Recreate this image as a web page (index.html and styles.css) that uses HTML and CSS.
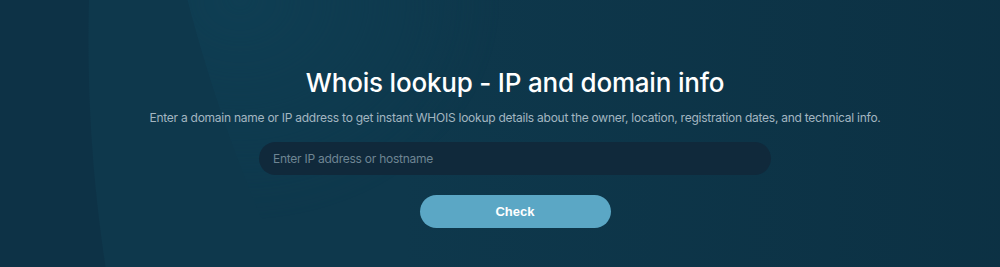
FILE: index.html
```html
<!DOCTYPE html>
<html lang="en">
<head>
<meta charset="UTF-8">
<title>Whois lookup</title>
<link rel="stylesheet" href="styles.css">
</head>
<body>

<section class="hero">
    <div class="hero-content">
        <h1 class="hero-title">Whois lookup - IP and domain info</h1>
        <p class="hero-text">Enter a domain name or IP address to get instant WHOIS lookup details about the owner, location, registration dates, and technical info.</p>
        <form class="lookup-form" onsubmit="return false">
            <input type="text" class="lookup-input" placeholder="Enter IP address or hostname">
            <button type="submit" class="lookup-button">Check</button>
        </form>
    </div>
</section>

</body>
</html>
```

FILE: styles.css
```css
html, body {
    margin: 0;
    padding: 0;
}

body {
    font-family: Inter, "Noto Sans", sans-serif;
    background-color: #0d3246;
    color: #fff;
}

.hero {
    position: relative;
    height: 267px;
    overflow: hidden;
    background:
        linear-gradient(to right, rgba(11, 44, 62, 0) 40%, rgba(11, 46, 64, 0.7) 100%),
        radial-gradient(circle 1515px at 1603px 40px, #0e384c 0, #0e384c 1514px, rgba(14, 56, 76, 0) 1515px),
        #0d3246;
}

/* soft lighter band near the top left */
.hero::before {
    content: "";
    position: absolute;
    inset: 0;
    background: radial-gradient(circle 1593px at 1729px -400px, #0f3e53 0, #0f3e53 1592px, rgba(15, 62, 83, 0) 1593px);
    -webkit-mask-image: radial-gradient(ellipse 260px 220px at 240px 0, #000 0, rgba(0, 0, 0, 0.5) 50%, transparent 100%);
    mask-image: radial-gradient(ellipse 260px 220px at 240px 0, #000 0, rgba(0, 0, 0, 0.5) 50%, transparent 100%);
}

.hero-content {
    position: relative;
    display: flex;
    flex-direction: column;
    align-items: center;
    padding: 67px 0 0 30px;
}

.hero-title {
    margin: 0;
    font-size: 26px;
    line-height: 32px;
    font-weight: 500;
    letter-spacing: -0.2px;
}

.hero-text {
    margin: 10px 0 0;
    font-size: 12px;
    line-height: 18px;
    letter-spacing: -0.25px;
    color: #a3b6c1;
}

.lookup-form {
    display: flex;
    flex-direction: column;
    align-items: center;
    gap: 20px;
    margin-top: 15px;
}

.lookup-input {
    width: 512px;
    height: 33px;
    box-sizing: border-box;
    padding: 0 14px;
    border: none;
    border-radius: 17px;
    background: #10293b;
    color: #fff;
    font-family: Inter, "Noto Sans", sans-serif;
    font-size: 12px;
    letter-spacing: -0.25px;
    outline: none;
}

.lookup-input::placeholder {
    color: #6e8593;
}

.lookup-button {
    width: 191px;
    height: 33px;
    border: none;
    border-radius: 17px;
    background: #5ba7c5;
    color: #fff;
    font-family: "Liberation Sans", Arial, sans-serif;
    font-weight: bold;
    font-size: 13px;
    cursor: pointer;
}
```
